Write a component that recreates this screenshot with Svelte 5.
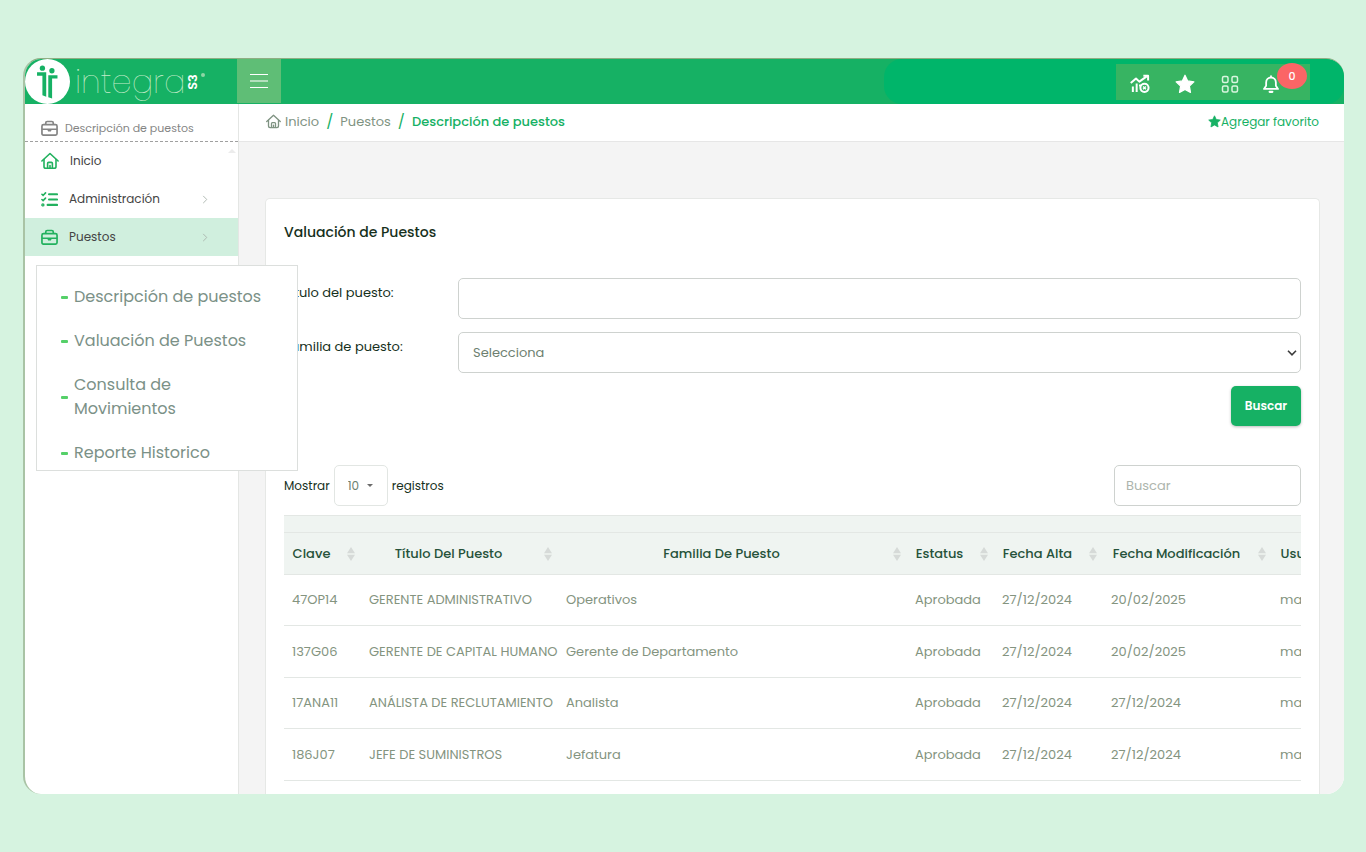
<script>
  const rows = [
    ['47OP14', 'GERENTE ADMINISTRATIVO', 'Operativos', 'Aprobada', '27/12/2024', '20/02/2025', 'master'],
    ['137G06', 'GERENTE DE CAPITAL HUMANO', 'Gerente de Departamento', 'Aprobada', '27/12/2024', '20/02/2025', 'master'],
    ['17ANA11', 'ANÁLISTA DE RECLUTAMIENTO', 'Analista', 'Aprobada', '27/12/2024', '27/12/2024', 'master'],
    ['186J07', 'JEFE DE SUMINISTROS', 'Jefatura', 'Aprobada', '27/12/2024', '27/12/2024', 'master']
  ];
  const columns = ['Clave', 'Título Del Puesto', 'Familia De Puesto', 'Estatus', 'Fecha Alta', 'Fecha Modificación', 'Usuario'];
  const submenu = ['Descripción de puestos', 'Valuación de Puestos', 'Consulta de Movimientos', 'Reporte Historico'];
</script>

{#snippet briefcase()}
  <svg class="side-icon" viewBox="0 0 18 18" fill="none" stroke="currentColor" stroke-width="1.8" stroke-linejoin="round" aria-hidden="true">
    <path d="M5 5V3.2Q5 1.600 6.600 1.600h4.800Q13 1.600 13 3.200V5" />
    <path d="M2.600 5h12.800q1.600 0 1.600 1.600v7.800q0 1.600-1.600 1.600H2.600Q1 16 1 14.400V6.600Q1 5 2.600 5Z" />
    <path d="M1 9.800h16" />
    <path d="M6.500 9.800h5l-1 2.500h-3Z" fill="currentColor" stroke="none" />
  </svg>
{/snippet}

{#snippet house()}
  <svg viewBox="0 0 18 18" fill="none" stroke="currentColor" stroke-width="1.600" stroke-linejoin="round" stroke-linecap="round" aria-hidden="true">
    <path d="M.9 9 9 1.500 17.100 9" />
    <path d="M3 7.500v7q0 1.800 1.800 1.800h8.400q1.800 0 1.800-1.800v-7" />
    <path d="M6.600 16v-4.600q0-1 1-1h2.800q1 0 1 1V16M9 13.500V16" />
  </svg>
{/snippet}

{#snippet star()}
  <svg viewBox="0 0 20 20" fill="currentColor" stroke="currentColor" stroke-width="1.200" stroke-linejoin="round" aria-hidden="true">
    <path d="m10 1.200 2.700 5.700 6.200.9-4.500 4.300 1.100 6.300L10 15.400l-5.500 3 1.100-6.300L1.100 7.800l6.200-.9Z" />
  </svg>
{/snippet}

{#snippet chevron()}
  <svg class="chevron" viewBox="0 0 6 10" fill="none" stroke="currentColor" aria-hidden="true"><path d="m1 1 4 4-4 4" /></svg>
{/snippet}

<div class="frame">
  <header>
    <a class="logo" href="#inicio" aria-label="integra S3">
      <svg class="emblem" viewBox="0 0 46 46" aria-hidden="true">
        <circle cx="23" cy="23" r="23" fill="#fff" />
        <g fill="#16b164">
          <circle cx="17.800" cy="9.400" r="2.700" />
          <circle cx="27.500" cy="12" r="2.700" />
          <path d="M12.300 13.500h9.400v25.200l-3.900-1.700V17h-5.500Z" />
          <path d="M23.800 16.500h9.400V20h-5.500v20.500l-3.900-1.500Z" />
        </g>
      </svg>
      <span class="wordmark">integra</span><span class="s3">S3</span><i class="reg"></i>
    </a>
    <button class="burger" aria-label="Menú">
      <svg viewBox="0 0 18 16" stroke="#fff" aria-hidden="true"><path d="M0 1.500h18M0 14.500h18" /><path d="M0 8h18" stroke-width="1.500" opacity=".7" /></svg>
    </button>
    <div class="band">
      <div class="tools">
        <button aria-label="Indicadores">
          <svg viewBox="0 0 21 20" fill="none" stroke="#fff" stroke-width="2.100" stroke-linejoin="round" aria-hidden="true">
            <path d="m.8 9 5.500-4.800 3.500 3.300L17.600 2" /><path d="M14 1.300h5v4.900" />
            <path d="M3 12.500v6M7 9.500v9" /><path d="M10.500 10.500v2" />
            <circle cx="15.200" cy="14" r="4.300" /><path d="M13.700 12.500l3 3M16.700 12.500l-3 3" stroke-width="1.500" />
          </svg>
        </button>
        <button aria-label="Favoritos">{@render star()}</button>
        <button aria-label="Aplicaciones">
          <svg viewBox="0 0 20 20" fill="none" stroke="#d9f5df" stroke-width="1.500" aria-hidden="true">
            <rect x="2.500" y="2.500" width="5.500" height="6" rx="1.500" /><rect x="12" y="2.500" width="5.500" height="6" rx="1.500" />
            <rect x="2.500" y="12" width="5.500" height="6" rx="1.500" /><rect x="12" y="12" width="5.500" height="6" rx="1.500" />
          </svg>
        </button>
        <button class="bell" aria-label="Notificaciones">
          <svg viewBox="0 0 20 20" fill="none" stroke="#fff" stroke-width="2" stroke-linejoin="round" stroke-linecap="round" aria-hidden="true">
            <path d="M10 1.200v1.600M2.200 15.500h15.600L15.400 12V8.200a5.400 5.400 0 0 0-10.800 0V12Z" /><path d="M8.500 18.700h3" stroke-width="2.400" />
          </svg>
          <span class="badge">0</span>
        </button>
      </div>
    </div>
  </header>

  <div class="body">
    <aside>
      <div class="current">{@render briefcase()}<span>Descripción de puestos</span></div>
      <i class="scroll-up"></i>
      <nav>
        <a href="#inicio"><span class="home-icon">{@render house()}</span><span>Inicio</span></a>
        <a href="#administracion">
          <svg class="side-icon" viewBox="0 0 18 18" fill="none" stroke="currentColor" stroke-width="2.200" stroke-linecap="round" aria-hidden="true">
            <path d="M8.500 3.500H17M8.500 9H17M7 14.700h10" /><path d="m1 3.500 1.200 1.200L4.800 2M1 9l1.200 1.200L4.800 7.500" stroke-width="1.700" /><circle cx="2" cy="14.700" r=".7" />
          </svg>
          <span>Administración</span>{@render chevron()}
        </a>
        <a class="active" href="#puestos">{@render briefcase()}<span>Puestos</span>{@render chevron()}</a>
      </nav>
    </aside>

    <main>
      <div class="crumbs">
        <nav aria-label="Ruta">
          <a href="#inicio">{@render house()}Inicio</a><b>/</b><a href="#puestos">Puestos</a><b>/</b><strong>Descripción de puestos</strong>
        </nav>
        <a class="favorite" href="#favorito">{@render star()}Agregar favorito</a>
      </div>

      <section class="card">
        <h1>Valuación de Puestos</h1>
        <form>
          <label for="titulo">Título del puesto:</label>
          <input id="titulo" type="text" />
          <label for="familia">Familia de puesto:</label>
          <div class="select">
            <select id="familia"><option>Selecciona</option></select>
            <svg viewBox="0 0 10 6" fill="none" stroke="#3c3c3c" stroke-width="1.600" aria-hidden="true"><path d="m1 .8 4 4 4-4" /></svg>
          </div>
          <button type="button">Buscar</button>
        </form>

        <div class="controls">
          <label for="cantidad">Mostrar</label>
          <div class="count">
            <select id="cantidad"><option>10</option></select>
            <i></i>
          </div>
          <span>registros</span>
          <input type="search" placeholder="Buscar" aria-label="Buscar registros" />
        </div>

        <div class="table-wrap">
          <table>
            <colgroup><col class="c1" /><col class="c2" /><col /><col class="c4" /><col class="c5" /><col class="c6" /><col class="c7" /></colgroup>
            <thead>
              <tr class="spacer"><td colspan="7"></td></tr>
              <tr>
                {#each columns as column}
                  <th scope="col"><div><span>{column}</span><svg viewBox="0 0 8 14" fill="#d6dad8" aria-hidden="true"><path d="M4 0 8 6.300H0ZM0 7.700h8L4 14Z" /></svg></div></th>
                {/each}
              </tr>
            </thead>
            <tbody>
              {#each rows as row}
                <tr>{#each row as cell}<td>{cell}</td>{/each}</tr>
              {/each}
            </tbody>
          </table>
        </div>
      </section>
    </main>
  </div>

  <div class="flyout">
    {#each submenu as item}<a href="#puestos"><i></i><span>{item}</span></a>{/each}
  </div>
</div>

<style>
  :global(body) { margin: 0; background: #d6f3e0; }
  * { box-sizing: border-box; }
  .frame {
    position: relative;
    display: flex;
    flex-direction: column;
    height: calc(100vh - 116px);
    margin: 58px 22px 58px 23px;
    overflow: hidden;
    border-left: 2px solid #a9c3a5;
    border-top: 1px solid #8fae83;
    border-radius: 18px;
    background: #fff;
    color: #16301c;
    font: 13px/20px Poppins, Inter, sans-serif;
  }
  a { color: inherit; text-decoration: none; }
  button { padding: 0; border: 0; background: none; color: inherit; font: inherit; }
  input, select { font: inherit; }
  svg { display: block; flex: none; }

  header { display: flex; flex: none; height: 45px; background: #16b164; }
  .logo { display: flex; width: 212px; }
  .emblem { width: 45px; height: 45px; }
  .wordmark { margin-left: 5px; color: #c4ecc9; font-size: 32px; font-weight: 200; line-height: 45px; }
  .s3 { align-self: center; color: #fff; font-size: 13px; font-weight: 600; transform: rotate(-90deg); }
  .reg { width: 4px; height: 4px; margin-top: 14px; border-radius: 50%; background: #8ed6a5; }
  .burger { display: grid; place-items: center; width: 44px; margin-bottom: 1px; background: #5fbe76; }
  .burger svg { width: 18px; height: 16px; }
  .band { display: flex; flex: none; align-items: center; justify-content: flex-end; width: 460px; margin-left: auto; padding-right: 34px; border-radius: 18px; background: #00b56a; }
  .tools { display: flex; align-items: center; gap: 25px; height: 36px; padding: 4px 30px 0 14px; background: #37b462; color: #fff; }
  .tools svg { width: 20px; height: 20px; }
  .bell { position: relative; margin-left: -3px; }
  .bell svg { width: 18px; }
  .badge { position: absolute; top: -11px; left: 15px; width: 30px; height: 26px; border-radius: 50%; background: #fb6566; color: #fff; font-size: 11px; font-weight: 500; line-height: 26px; }

  .body { display: flex; flex: 1; min-height: 0; }
  aside { position: relative; flex: none; width: 214px; border-right: 1px solid #e4e6e4; font-size: 12px; }
  .current { display: flex; align-items: center; gap: 7px; height: 38px; padding: 11px 16px 0; border-bottom: 1px dashed #a0a0a0; color: #858585; font-size: 11px; }
  .side-icon { width: 17px; height: 17px; }
  .scroll-up { position: absolute; top: 45px; right: 2px; border: 4px solid transparent; border-top: 0; border-bottom-color: #ececec; }
  aside nav a { display: flex; align-items: center; gap: 11px; height: 38px; padding: 0 30px 0 16px; color: #444; }
  aside nav svg { color: #22b15e; }
  .home-icon svg { width: 18px; height: 18px; }
  aside nav .chevron { width: 6px; height: 9px; margin-left: auto; color: #a9b3ab; }
  aside nav .active { background: #d0efde; }

  main { display: flex; flex: 1; flex-direction: column; min-width: 0; background: #f4f4f4; }
  .crumbs { display: flex; flex: none; align-items: center; justify-content: space-between; height: 38px; padding: 0 25px 2px 27px; border-bottom: 1px solid #e6e6e6; background: #fff; }
  .crumbs nav { display: flex; align-items: center; color: #7f9382; }
  .crumbs a { display: flex; align-items: center; gap: 4px; }
  .crumbs svg { width: 15px; height: 15px; }
  .crumbs b { margin: 0 7px; color: #16b164; font-size: 15px; font-weight: 400; }
  .crumbs strong { color: #16b164; font-weight: 500; }
  .crumbs .favorite { gap: 0; color: #16b164; font-size: 12px; }
  .crumbs .favorite svg { width: 13px; height: 13px; }

  .card { flex: 1; min-height: 0; margin: 56px 24px 0 26px; padding: 23px 18px; overflow: hidden; border: 1px solid #e6e8e6; border-bottom: 0; border-radius: 5px 5px 0 0; background: #fff; }
  h1 { margin: 0; font-size: 14px; font-weight: 500; line-height: 20px; }
  form { display: grid; grid-template-columns: 174px 1fr; row-gap: 13px; margin-top: 36px; }
  form label { padding-top: 5px; }
  input, select { width: 100%; height: 41px; border: 1px solid #ced2cf; border-radius: 5px; background: #fff; color: #6d7f70; appearance: none; outline: 0; }
  .select { position: relative; }
  .select select { padding: 0 14px; }
  .select svg { position: absolute; right: 4px; top: 18px; width: 10px; height: 6px; }
  form button { grid-column: 2; justify-self: end; width: 70px; height: 40px; border-radius: 5px; background: #16b164; box-shadow: 0 1px 3px #0004; color: #fff; font-size: 12px; font-weight: 600; }
  .controls { display: flex; align-items: center; gap: 4px; margin: 39px 0 9px; font-size: 12px; }
  .count { position: relative; width: 54px; }
  .count select { padding: 0 13px; border-color: #e2e6e3; }
  .count i { position: absolute; right: 15px; top: 19px; border: 3px solid transparent; border-top-color: #6b6b6b; border-bottom: 0; }
  .controls input { width: 187px; margin-left: auto; padding: 0 11px; font-size: 13px; }
  .controls input::placeholder { color: #adb5ad; }

  .table-wrap { overflow: hidden; }
  table { width: calc(100% + 60px); table-layout: fixed; border-collapse: collapse; }
  .c1 { width: 77px; }
  .c2 { width: 197px; }
  .c4 { width: 87px; }
  .c5 { width: 109px; }
  .c6 { width: 169px; }
  .c7 { width: 89px; }
  thead { background: #eff4f1; }
  .spacer td { height: 17px; padding: 0; }
  tr { border-top: 1px solid #e3e7e4; border-bottom: 1px solid #e3e7e4; }
  th { height: 42px; padding: 0 6px 0 8px; color: #26523a; font-size: 13px; font-weight: 500; white-space: nowrap; }
  th div { display: flex; align-items: center; gap: 16px; }
  th span { flex: 1; min-width: 0; }
  th svg { width: 8px; height: 14px; }
  tbody td { height: 51px; padding: 0 8px; color: #84947f; white-space: nowrap; }
  tbody tr:nth-child(even) td { height: 52px; }

  .flyout { position: absolute; top: 206px; left: 11px; display: flex; flex-direction: column; gap: 20px; width: 262px; padding: 19px 34px 5px 24px; border: 1px solid #dcdfdd; background: #fff; color: #7b9187; font-size: 16px; line-height: 24px; }
  .flyout a { display: flex; align-items: center; gap: 6px; }
  .flyout a:nth-child(3) { padding-right: 60px; }
  .flyout i { flex: none; width: 7px; height: 3px; border-radius: 1px; background: #55d069; }
  .flyout span { flex: 1; }
  .flyout a:not(:nth-child(3)) span { white-space: nowrap; }
</style>
